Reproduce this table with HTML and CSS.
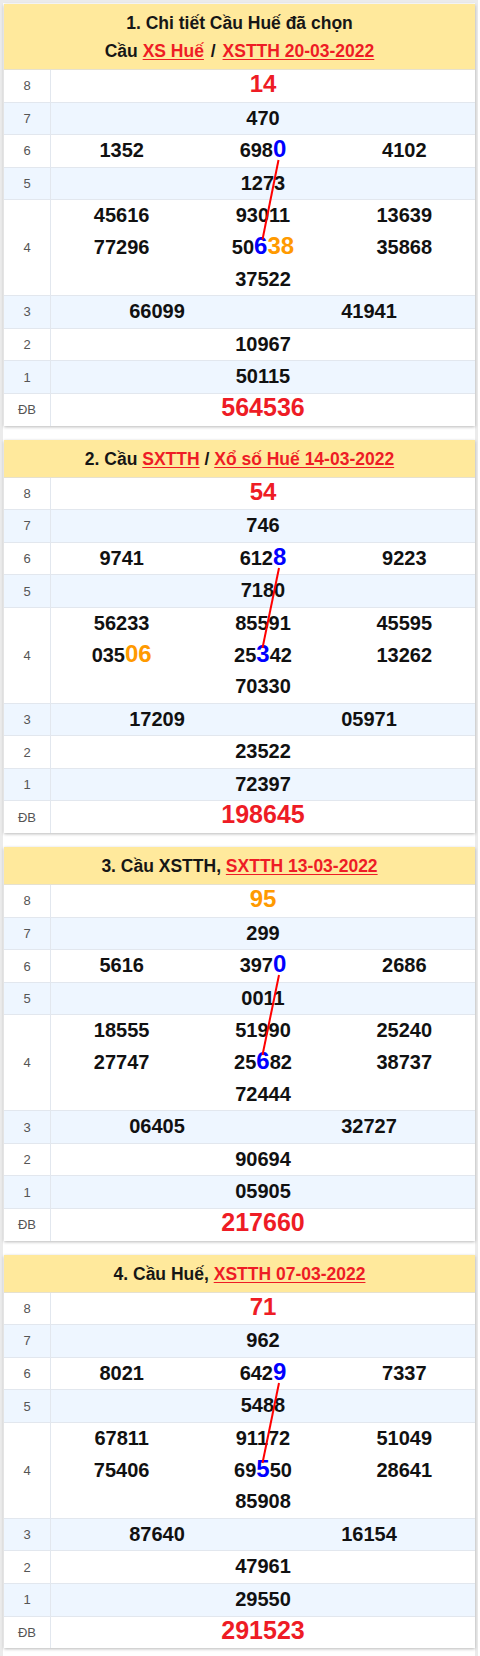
FILE: index.html
```html
<!DOCTYPE html>
<html lang="vi">
<head>
<meta charset="utf-8">
<title>Chi tiết Cầu Huế</title>
<link rel="stylesheet" href="styles.css">
</head>
<body>
<div class="page">

  <section class="card">
    <header class="card-head">
      <div>1. Chi tiết Cầu Huế đã chọn</div>
      <div>Cầu <a href="#">XS Huế</a> <span class="sep">/</span> <a href="#">XSTTH 20-03-2022</a></div>
    </header>
    <div class="board">
      <div class="row"><div class="lbl">8</div><div class="val"><span class="big red">14</span></div></div>
      <div class="row alt"><div class="lbl">7</div><div class="val">470</div></div>
      <div class="row"><div class="lbl">6</div><div class="val c3"><span>1352</span><span>698<b class="hl blue">0</b></span><span>4102</span></div></div>
      <div class="row alt"><div class="lbl">5</div><div class="val">1273</div></div>
      <div class="row"><div class="lbl">4</div><div class="val c3">
        <span>45616</span><span>93011</span><span>13639</span>
        <span>77296</span><span>50<b class="hl blue">6</b><b class="hl orange">38</b></span><span>35868</span>
        <span class="mid">37522</span>
      </div></div>
      <div class="row alt"><div class="lbl">3</div><div class="val c2"><span>66099</span><span>41941</span></div></div>
      <div class="row"><div class="lbl">2</div><div class="val">10967</div></div>
      <div class="row alt"><div class="lbl">1</div><div class="val">50115</div></div>
      <div class="row"><div class="lbl">ĐB</div><div class="val"><span class="db red">564536</span></div></div>
      <svg class="link" width="471" height="180" viewBox="0 0 471 180"><line x1="274.5" y1="90" x2="258.5" y2="169.5"/></svg>
    </div>
  </section>

  <section class="card">
    <header class="card-head">
      <div>2. Cầu <a href="#">SXTTH</a> / <a href="#">Xổ số Huế 14-03-2022</a></div>
    </header>
    <div class="board">
      <div class="row"><div class="lbl">8</div><div class="val"><span class="big red">54</span></div></div>
      <div class="row alt"><div class="lbl">7</div><div class="val">746</div></div>
      <div class="row"><div class="lbl">6</div><div class="val c3"><span>9741</span><span>612<b class="hl blue">8</b></span><span>9223</span></div></div>
      <div class="row alt"><div class="lbl">5</div><div class="val">7180</div></div>
      <div class="row"><div class="lbl">4</div><div class="val c3">
        <span>56233</span><span>85591</span><span>45595</span>
        <span>035<b class="hl orange">06</b></span><span>25<b class="hl blue">3</b>42</span><span>13262</span>
        <span class="mid">70330</span>
      </div></div>
      <div class="row alt"><div class="lbl">3</div><div class="val c2"><span>17209</span><span>05971</span></div></div>
      <div class="row"><div class="lbl">2</div><div class="val">23522</div></div>
      <div class="row alt"><div class="lbl">1</div><div class="val">72397</div></div>
      <div class="row"><div class="lbl">ĐB</div><div class="val"><span class="db red">198645</span></div></div>
      <svg class="link" width="471" height="180" viewBox="0 0 471 180"><line x1="275" y1="90" x2="258.5" y2="170"/></svg>
    </div>
  </section>

  <section class="card">
    <header class="card-head">
      <div>3. Cầu XSTTH, <a href="#">SXTTH 13-03-2022</a></div>
    </header>
    <div class="board">
      <div class="row"><div class="lbl">8</div><div class="val"><span class="big orange">95</span></div></div>
      <div class="row alt"><div class="lbl">7</div><div class="val">299</div></div>
      <div class="row"><div class="lbl">6</div><div class="val c3"><span>5616</span><span>397<b class="hl blue">0</b></span><span>2686</span></div></div>
      <div class="row alt"><div class="lbl">5</div><div class="val">0011</div></div>
      <div class="row"><div class="lbl">4</div><div class="val c3">
        <span>18555</span><span>51990</span><span>25240</span>
        <span>27747</span><span>25<b class="hl blue">6</b>82</span><span>38737</span>
        <span class="mid">72444</span>
      </div></div>
      <div class="row alt"><div class="lbl">3</div><div class="val c2"><span>06405</span><span>32727</span></div></div>
      <div class="row"><div class="lbl">2</div><div class="val">90694</div></div>
      <div class="row alt"><div class="lbl">1</div><div class="val">05905</div></div>
      <div class="row"><div class="lbl">ĐB</div><div class="val"><span class="db red">217660</span></div></div>
      <svg class="link" width="471" height="180" viewBox="0 0 471 180"><line x1="275" y1="90" x2="258.5" y2="170"/></svg>
    </div>
  </section>

  <section class="card">
    <header class="card-head">
      <div>4. Cầu Huế, <a href="#">XSTTH 07-03-2022</a></div>
    </header>
    <div class="board">
      <div class="row"><div class="lbl">8</div><div class="val"><span class="big red">71</span></div></div>
      <div class="row alt"><div class="lbl">7</div><div class="val">962</div></div>
      <div class="row"><div class="lbl">6</div><div class="val c3"><span>8021</span><span>642<b class="hl blue">9</b></span><span>7337</span></div></div>
      <div class="row alt"><div class="lbl">5</div><div class="val">5488</div></div>
      <div class="row"><div class="lbl">4</div><div class="val c3">
        <span>67811</span><span>91172</span><span>51049</span>
        <span>75406</span><span>69<b class="hl blue">5</b>50</span><span>28641</span>
        <span class="mid">85908</span>
      </div></div>
      <div class="row alt"><div class="lbl">3</div><div class="val c2"><span>87640</span><span>16154</span></div></div>
      <div class="row"><div class="lbl">2</div><div class="val">47961</div></div>
      <div class="row alt"><div class="lbl">1</div><div class="val">29550</div></div>
      <div class="row"><div class="lbl">ĐB</div><div class="val"><span class="db red">291523</span></div></div>
      <svg class="link" width="471" height="180" viewBox="0 0 471 180"><line x1="275" y1="90" x2="258.5" y2="170"/></svg>
    </div>
  </section>

</div>
</body>
</html>
```

FILE: styles.css
```css
* { box-sizing: border-box; }

html, body {
  margin: 0;
  padding: 0;
  background: #ffffff;
}

body {
  font-family: "Liberation Sans", Arial, sans-serif;
  color: #111111;
}

.page {
  width: 478px;
  min-height: 1656px;
  border: 3px solid #ebebeb;
  border-bottom: 0;
  padding: 1px 0 0 1px;
}

.card {
  background: #ffffff;
  box-shadow: 0 1px 3px rgba(0, 0, 0, 0.28);
  margin-bottom: 14px;
}

.card-head {
  background: #ffe99c;
  text-align: center;
  font-size: 17.5px;
  font-weight: bold;
  line-height: 28px;
  padding: 5px 4px 4px;
  color: #161616;
  border-bottom: 1px solid #e6e1cf;
}

.card-head a {
  color: #ee1c25;
  text-decoration: underline;
  text-underline-offset: 2px;
}

.sep {
  margin: 0 2px;
}

.board {
  position: relative;
}

.row {
  display: flex;
  border-bottom: 1px solid #e2e7ee;
  background: #ffffff;
}

.row:last-of-type {
  border-bottom: 0;
}

.row.alt {
  background: #eef6ff;
}

.lbl {
  width: 47px;
  flex: none;
  border-right: 1px solid #e2e7ee;
  font-size: 13px;
  color: #555555;
  display: flex;
  align-items: center;
  justify-content: center;
}

.val {
  flex: 1;
  text-align: center;
  font-size: 20px;
  font-weight: bold;
  line-height: 31.6px;
  color: #111111;
}

.c3 {
  display: grid;
  grid-template-columns: 1fr 1fr 1fr;
}

.c2 {
  display: grid;
  grid-template-columns: 1fr 1fr;
}

.mid {
  grid-column: 2;
}

.hl,
.big,
.db {
  line-height: 1;
}

.hl {
  font-size: 24px;
}

.big {
  font-size: 24px;
}

.db {
  font-size: 25px;
}

.red { color: #ee1c25; }
.blue { color: #0000ff; }
.orange { color: #ff9a00; }

.link {
  position: absolute;
  left: 0;
  top: 0;
  pointer-events: none;
  overflow: visible;
}

.link line {
  stroke: #ff0000;
  stroke-width: 2;
}
```
